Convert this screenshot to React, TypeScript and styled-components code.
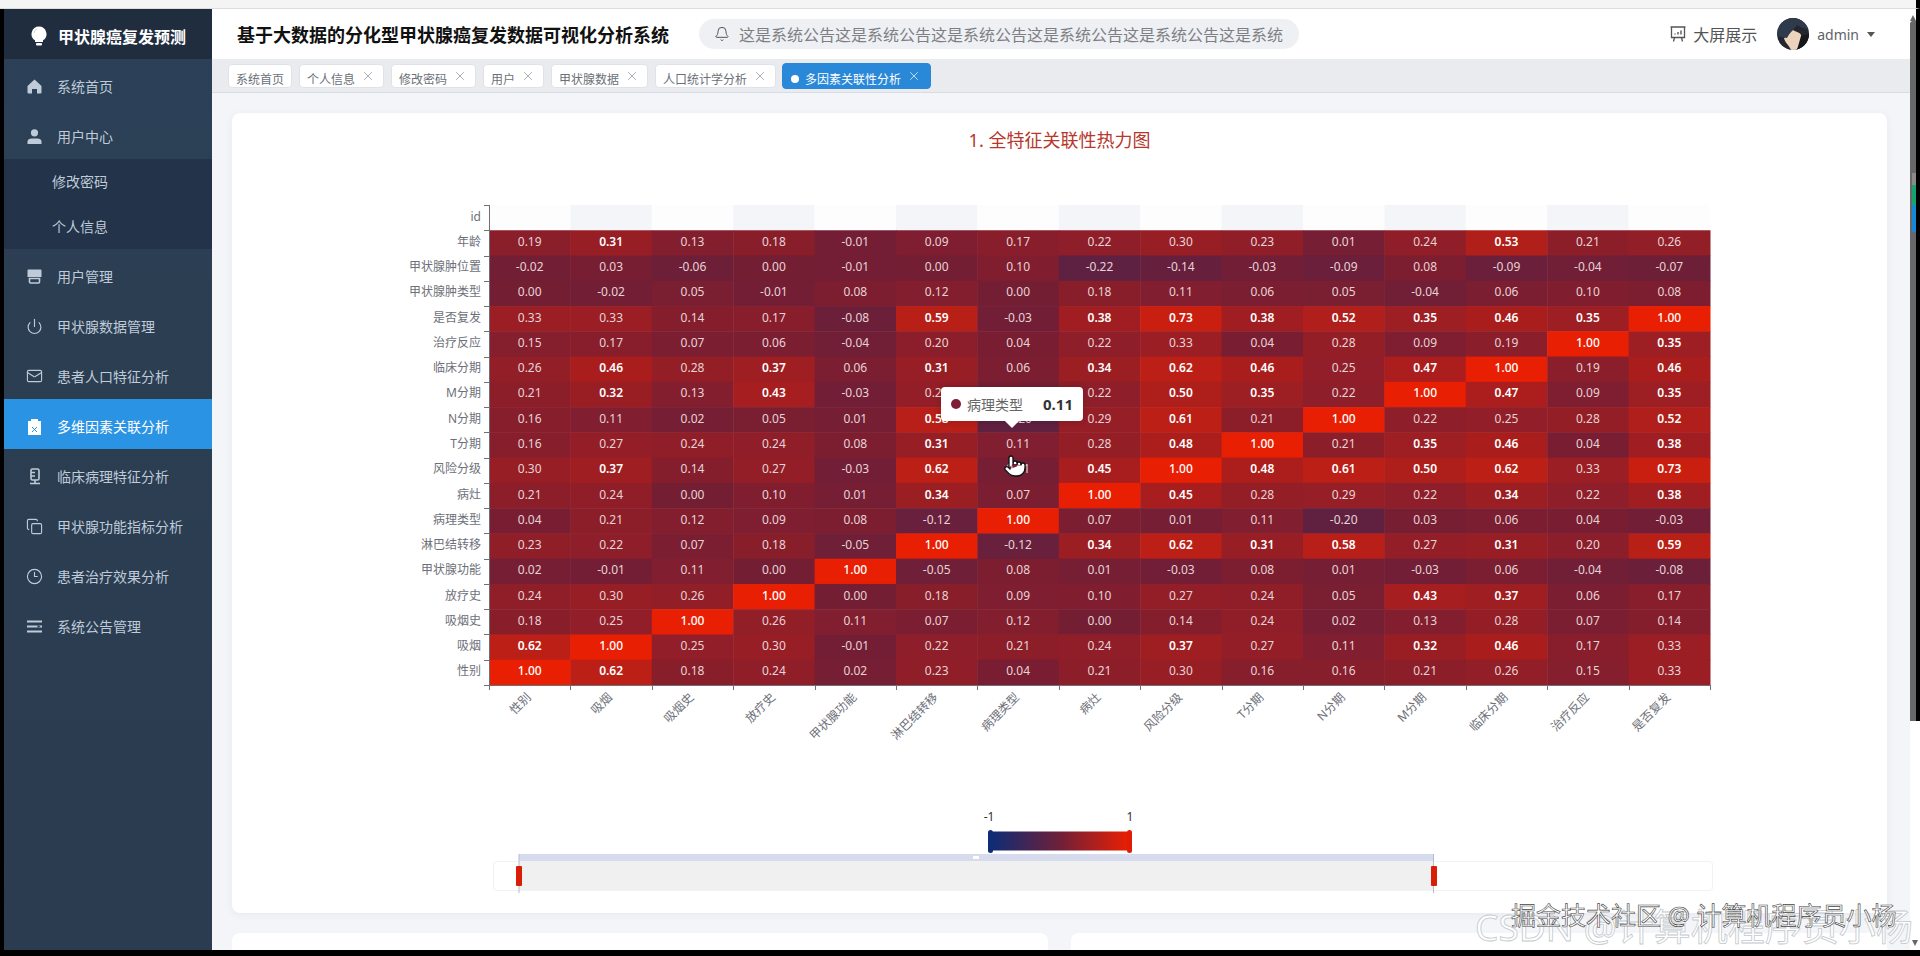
import React from "react";
import styled, { createGlobalStyle } from "styled-components";
import { Bell, Clock3, Copy, Mail, Pointer, Power, X } from "lucide-react";

const FONT = `"Noto Sans", "Noto Sans CJK SC", sans-serif`;

const GlobalStyle = createGlobalStyle`
  html, body {
    margin: 0;
    padding: 0;
    height: 956px;
    overflow: hidden;
    background: #000;
    font-family: ${FONT};
  }
  * { box-sizing: border-box; }
`;

const Screen = styled.div`
  position: relative;
  width: 1920px;
  height: 950px;
  display: flex;
  flex-direction: column;
  background: #fff;
  overflow: hidden;
`;

const BrowserEdge = styled.div`
  height: 9px;
  flex: none;
  background: #f4f4f4;
  border-bottom: 1px solid #dcdcdc;
  border-right: 4px solid #000;
`;

const Body = styled.div`
  flex: 1;
  display: flex;
  min-height: 0;
  background: #000;
  padding-left: 4px;
`;

const Sidebar = styled.aside`
  width: 208px;
  flex: none;
  display: flex;
  flex-direction: column;
  background: linear-gradient(180deg, #2b4159 0%, #2c3e52 30%, #2b3c50 100%);
`;

const Brand = styled.div`
  height: 50px;
  display: flex;
  align-items: center;
  gap: 11px;
  padding: 3px 0 0 27px;
  background: #1f2d3f;
  color: #fff;
  font-size: 16px;
  font-weight: 700;
`;

const MenuItem = styled.div<{ $active?: boolean }>`
  height: 50px;
  display: flex;
  align-items: center;
  gap: 14px;
  padding: 4px 0 0 22px;
  font-size: 14px;
  color: ${({ $active }) => ($active ? "#fff" : "#bfcbd9")};
  background: ${({ $active }) => ($active ? "#2b93e4" : "transparent")};
`;

const MenuIcon = styled.span`
  width: 17px;
  height: 18px;
  flex: none;
  display: flex;
  align-items: center;
  justify-content: center;
`;

const SubMenu = styled.div`
  background: #233349;
`;

const SubItem = styled.div`
  height: 45px;
  display: flex;
  align-items: center;
  padding: 0 0 2px 48px;
  font-size: 14px;
  color: #bfcbd9;
`;

const Main = styled.main`
  flex: 1;
  min-width: 0;
  display: flex;
  flex-direction: column;
  background: #f3f5f9;
`;

const TopBar = styled.header`
  height: 50px;
  flex: none;
  display: flex;
  align-items: center;
  padding: 0 35px 0 25px;
  background: #fff;
`;

const SystemTitle = styled.h1`
  margin: 0;
  font-size: 18px;
  font-weight: 700;
  color: #111;
  white-space: nowrap;
`;

const Notice = styled.div`
  width: 600px;
  height: 30px;
  margin-left: 30px;
  display: flex;
  align-items: center;
  gap: 9px;
  padding-left: 15px;
  border-radius: 15px;
  background: #eff0f3;
  color: #7c8085;
  font-size: 16px;
  white-space: nowrap;
  overflow: hidden;
`;

const TopActions = styled.div`
  margin-left: auto;
  display: flex;
  align-items: center;
`;

const ScreenLink = styled.div`
  display: flex;
  align-items: center;
  gap: 7px;
  font-size: 16px;
  color: #555;
`;

const Avatar = styled.svg`
  width: 32px;
  height: 32px;
  margin-left: 20px;
  border-radius: 50%;
`;

const UserName = styled.span`
  margin-left: 8px;
  font-size: 14px;
  color: #5f6368;
`;

const Caret = styled.span`
  margin-left: 8px;
  width: 0;
  height: 0;
  border-left: 4px solid transparent;
  border-right: 4px solid transparent;
  border-top: 5px solid #555;
`;

const TabBar = styled.nav`
  height: 34px;
  flex: none;
  display: flex;
  gap: 7px;
  padding: 5px 0 0 16px;
  background: #e9ebee;
  border-bottom: 1px solid #d8dce5;
`;

const Tab = styled.div<{ $active?: boolean }>`
  height: ${({ $active }) => ($active ? "26px" : "24px")};
  margin: ${({ $active }) => ($active ? "-1px 0 0 -1px" : "0")};
  display: flex;
  align-items: flex-start;
  gap: 8px;
  padding: ${({ $active }) => ($active ? "8px 8px 0 8px" : "7px 7px 0 7px")};
  border: 1px solid ${({ $active }) => ($active ? "#2a88d8" : "#dfe2e8")};
  border-radius: 4px;
  font-size: 12px;
  line-height: 16px;
  white-space: nowrap;
  color: ${({ $active }) => ($active ? "#fff" : "#6b7078")};
  background: ${({ $active }) => ($active ? "#2a88d8" : "#fff")};

  svg {
    flex: none;
    margin: -3px 1px 0 -2px;
  }
`;

const TabDot = styled.span`
  width: 8px;
  height: 8px;
  margin: 3px -2px 0 0;
  border-radius: 50%;
  background: #fff;
`;

const Content = styled.section`
  flex: 1;
  min-height: 0;
  display: flex;
  flex-direction: column;
  gap: 20px;
  padding: 20px 0 0 20px;
`;

const Card = styled.div`
  position: relative;
  width: 1655px;
  height: 800px;
  flex: none;
  display: flex;
  flex-direction: column;
  align-items: center;
  border-radius: 8px;
  background: #fff;
  box-shadow: 0 2px 8px rgba(40, 50, 70, 0.06);
`;

const CardTitle = styled.h2`
  margin: 15px 0 0;
  font-size: 18px;
  line-height: 24px;
  font-weight: 400;
  color: #b8372c;
`;

const ChartWrap = styled.div`
  width: 1655px;
  height: 761px;
`;

const PeekRow = styled.div`
  display: grid;
  grid-template-columns: 816px 816px;
  gap: 23px;
`;

const PeekCard = styled.div`
  height: 30px;
  border-radius: 8px 8px 0 0;
  background: #fff;
`;

const ScrollRail = styled.div`
  position: relative;
  width: 10px;
  flex: none;
  display: flex;
  flex-direction: column;
  background: #fff;
`;

const ScrollCap = styled.div`
  height: 12px;
  flex: none;
  display: flex;
  align-items: flex-end;
  border-right: 4px solid #000;
`;

const ArrowUp = styled.span`
  width: 0;
  height: 0;
  border-left: 3px solid transparent;
  border-right: 3px solid transparent;
  border-bottom: 6px solid #666;
`;

const ScrollThumb = styled.div`
  width: 10px;
  height: 700px;
  flex: none;
  background: #686868;
  border-right: 4px solid #000;
  border-radius: 3px 0 0 0;
`;

const ArrowDown = styled.span`
  margin: auto 0 4px 2px;
  width: 0;
  height: 0;
  border-left: 3px solid transparent;
  border-right: 3px solid transparent;
  border-top: 6px solid #666;
`;

const ScrollMarks = styled.div`
  position: absolute;
  left: 2px;
  top: 164px;
  width: 4px;
  height: 59px;
  background: linear-gradient(180deg, #8a8a8a 0 12px, #15a36f 12px 32px, #1688d8 32px 100%);
`;

const Tooltip = styled.div`
  position: absolute;
  left: 709px;
  top: 274px;
  width: 142px;
  height: 34px;
  display: flex;
  align-items: center;
  padding: 0 10px 0 10px;
  border-radius: 4px;
  background: #fff;
  box-shadow: 0 0 6px rgba(0, 0, 0, 0.2);
  font-size: 14px;
  color: #666;

  &::after {
    content: "";
    position: absolute;
    left: 66px;
    bottom: -5px;
    width: 10px;
    height: 10px;
    background: #fff;
    transform: rotate(45deg);
  }
`;

const TipDot = styled.span`
  width: 10px;
  height: 10px;
  margin-right: 6px;
  border-radius: 50%;
  background: #7f1d37;
`;

const TipValue = styled.b`
  margin-left: auto;
  font-size: 15px;
  color: #333;
`;

const HandCursor = styled(Pointer)`
  position: absolute;
  left: 771px;
  top: 341px;
`;

const Watermark = styled.div<{ $top: number; $left: number; $size: number; $stroke: string; $width: number }>`
  position: absolute;
  top: ${({ $top }) => $top}px;
  left: ${({ $left }) => $left}px;
  font-size: ${({ $size }) => $size}px;
  line-height: 1;
  white-space: nowrap;
  color: #fff;
  -webkit-text-stroke: ${({ $width }) => $width}px ${({ $stroke }) => $stroke};
  pointer-events: none;
`;

const labels = [
  "性别", "吸烟", "吸烟史", "放疗史", "甲状腺功能", "淋巴结转移", "病理类型", "病灶",
  "风险分级", "T分期", "N分期", "M分期", "临床分期", "治疗反应", "是否复发",
];

const rows: { name: string; values: number[] }[] = [
  { name: "年龄", values: [0.19, 0.31, 0.13, 0.18, -0.01, 0.09, 0.17, 0.22, 0.3, 0.23, 0.01, 0.24, 0.53, 0.21, 0.26] },
  { name: "甲状腺肿位置", values: [-0.02, 0.03, -0.06, 0, -0.01, 0, 0.1, -0.22, -0.14, -0.03, -0.09, 0.08, -0.09, -0.04, -0.07] },
  { name: "甲状腺肿类型", values: [0, -0.02, 0.05, -0.01, 0.08, 0.12, 0, 0.18, 0.11, 0.06, 0.05, -0.04, 0.06, 0.1, 0.08] },
  { name: "是否复发", values: [0.33, 0.33, 0.14, 0.17, -0.08, 0.59, -0.03, 0.38, 0.73, 0.38, 0.52, 0.35, 0.46, 0.35, 1] },
  { name: "治疗反应", values: [0.15, 0.17, 0.07, 0.06, -0.04, 0.2, 0.04, 0.22, 0.33, 0.04, 0.28, 0.09, 0.19, 1, 0.35] },
  { name: "临床分期", values: [0.26, 0.46, 0.28, 0.37, 0.06, 0.31, 0.06, 0.34, 0.62, 0.46, 0.25, 0.47, 1, 0.19, 0.46] },
  { name: "M分期", values: [0.21, 0.32, 0.13, 0.43, -0.03, 0.27, 0.03, 0.22, 0.5, 0.35, 0.22, 1, 0.47, 0.09, 0.35] },
  { name: "N分期", values: [0.16, 0.11, 0.02, 0.05, 0.01, 0.58, -0.2, 0.29, 0.61, 0.21, 1, 0.22, 0.25, 0.28, 0.52] },
  { name: "T分期", values: [0.16, 0.27, 0.24, 0.24, 0.08, 0.31, 0.11, 0.28, 0.48, 1, 0.21, 0.35, 0.46, 0.04, 0.38] },
  { name: "风险分级", values: [0.3, 0.37, 0.14, 0.27, -0.03, 0.62, 0.01, 0.45, 1, 0.48, 0.61, 0.5, 0.62, 0.33, 0.73] },
  { name: "病灶", values: [0.21, 0.24, 0, 0.1, 0.01, 0.34, 0.07, 1, 0.45, 0.28, 0.29, 0.22, 0.34, 0.22, 0.38] },
  { name: "病理类型", values: [0.04, 0.21, 0.12, 0.09, 0.08, -0.12, 1, 0.07, 0.01, 0.11, -0.2, 0.03, 0.06, 0.04, -0.03] },
  { name: "淋巴结转移", values: [0.23, 0.22, 0.07, 0.18, -0.05, 1, -0.12, 0.34, 0.62, 0.31, 0.58, 0.27, 0.31, 0.2, 0.59] },
  { name: "甲状腺功能", values: [0.02, -0.01, 0.11, 0, 1, -0.05, 0.08, 0.01, -0.03, 0.08, 0.01, -0.03, 0.06, -0.04, -0.08] },
  { name: "放疗史", values: [0.24, 0.3, 0.26, 1, 0, 0.18, 0.09, 0.1, 0.27, 0.24, 0.05, 0.43, 0.37, 0.06, 0.17] },
  { name: "吸烟史", values: [0.18, 0.25, 1, 0.26, 0.11, 0.07, 0.12, 0, 0.14, 0.24, 0.02, 0.13, 0.28, 0.07, 0.14] },
  { name: "吸烟", values: [0.62, 1, 0.25, 0.3, -0.01, 0.22, 0.21, 0.24, 0.37, 0.27, 0.11, 0.32, 0.46, 0.17, 0.33] },
  { name: "性别", values: [1, 0.62, 0.18, 0.24, 0.02, 0.23, 0.04, 0.21, 0.3, 0.16, 0.16, 0.21, 0.26, 0.15, 0.33] },
];

const LOW = [15, 44, 116];
const MID = [116, 30, 52];
const HIGH = [232, 31, 3];

const cellColor = (v: number) => {
  const [from, to, t] = v < 0 ? [MID, LOW, -v] : [MID, HIGH, v];
  const mix = from.map((c, i) => Math.round(c + (to[i] - c) * t));
  return `rgb(${mix.join(",")})`;
};

// chart coordinates, relative to the card (card starts at 232, 113)
const PLOT_X = 257;
const PLOT_W = 1221;
const PLOT_TOP = 92;
const PLOT_H = 480;
const COL_W = PLOT_W / 15;
const ROW_H = PLOT_H / 19;

const HeatmapChart = () => (
  <svg width={1655} height={800} viewBox="0 0 1655 800" style={{ position: "absolute", left: 0, top: 0 }} fontFamily={FONT}>
    {labels.map((_, i) => (
      <rect
        key={i}
        x={PLOT_X + i * COL_W}
        y={PLOT_TOP}
        width={COL_W}
        height={ROW_H}
        fill={i % 2 ? "#f3f5f9" : "#fdfdfe"}
      />
    ))}

    {rows.map((row, r) => {
      const y = PLOT_TOP + (r + 1) * ROW_H;
      return (
        <g key={row.name}>
          {row.values.map((v, c) => {
            const strong = (v >= 0.31 && v !== 0.33) || v === 1;
            return (
              <g key={c}>
                <rect x={PLOT_X + c * COL_W} y={y} width={COL_W + 0.5} height={ROW_H + 0.5} fill={cellColor(v)} />
                <text
                  x={PLOT_X + c * COL_W + COL_W / 2}
                  y={y + ROW_H / 2 + 3}
                  textAnchor="middle"
                  fontSize={12}
                  fontWeight={v === 1 ? 500 : strong ? 600 : 400}
                  fill={strong ? "#fff" : "#e6d3d6"}
                >
                  {v.toFixed(2)}
                </text>
              </g>
            );
          })}
          <text x={PLOT_X - 8} y={y + ROW_H / 2 + 3} textAnchor="end" fontSize={12} fill="#6e7079">
            {row.name}
          </text>
        </g>
      );
    })}
    <text x={PLOT_X - 8} y={PLOT_TOP + ROW_H / 2 + 3} textAnchor="end" fontSize={12} fill="#6e7079">
      id
    </text>

    <g stroke="#6e7079" strokeWidth={1}>
      <line x1={PLOT_X + 0.5} y1={PLOT_TOP} x2={PLOT_X + 0.5} y2={PLOT_TOP + PLOT_H} />
      <line x1={PLOT_X} y1={PLOT_TOP + PLOT_H + 0.5} x2={PLOT_X + PLOT_W} y2={PLOT_TOP + PLOT_H + 0.5} />
      {Array.from({ length: 20 }, (_, i) => {
        const y = Math.round(PLOT_TOP + i * ROW_H) + 0.5;
        return <line key={i} x1={PLOT_X - 5} y1={y} x2={PLOT_X} y2={y} />;
      })}
      {Array.from({ length: 16 }, (_, i) => {
        const x = Math.round(PLOT_X + i * COL_W) + 0.5;
        return <line key={i} x1={x} y1={PLOT_TOP + PLOT_H} x2={x} y2={PLOT_TOP + PLOT_H + 5} />;
      })}
    </g>

    {labels.map((label, i) => {
      const x = PLOT_X + i * COL_W + COL_W / 2 + 2;
      const y = PLOT_TOP + PLOT_H + 13;
      return (
        <text key={label} x={x} y={y} textAnchor="end" fontSize={12} fill="#6e7079" transform={`rotate(-45 ${x} ${y})`}>
          {label}
        </text>
      );
    })}

    {/* visual map */}
    <text x={757} y={708} textAnchor="middle" fontSize={12} fill="#333">-1</text>
    <text x={898} y={708} textAnchor="middle" fontSize={12} fill="#333">1</text>
    <defs>
      <linearGradient id="legend">
        <stop offset="0" stopColor="#0f2c74" />
        <stop offset="0.5" stopColor="#6f2039" />
        <stop offset="1" stopColor="#e81f03" />
      </linearGradient>
    </defs>
    <rect x={760} y={718} width={136} height={20} fill="url(#legend)" stroke="#fff" />
    <rect x={756} y={717} width={5} height={23} rx={2.5} fill="#0f2c74" />
    <rect x={895} y={717} width={5} height={23} rx={2.5} fill="#e01c06" />

    {/* data zoom */}
    <rect x={261.5} y={748.5} width={1219} height={29} rx={3} fill="#fff" stroke="#f2f2f2" />
    <rect x={287} y={748} width={915} height={29} fill="#f0f0f0" />
    <rect x={287} y={741} width={915} height={7} fill="#d6dbee" />
    <rect x={741} y={743} width={6} height={3} fill="#fff" />
    <line x1={287} y1={741} x2={287} y2={780} stroke="#b5bccb" />
    <line x1={1201.5} y1={741} x2={1201.5} y2={780} stroke="#b5bccb" />
    <rect x={284} y={753} width={6} height={20} rx={1} fill="#d81e06" />
    <rect x={1199} y={753} width={6} height={20} rx={1} fill="#d81e06" />
  </svg>
);

const ClipboardIcon = () => (
  <svg width="15" height="17" viewBox="0 0 15 17">
    <path d="M1 3h3V1h7v2h3v14H1z" fill="#fff" />
    <path d="M5 9l5 5M10 9l-5 5" stroke="#2b93e4" strokeWidth="1" />
  </svg>
);

const BulbIcon = () => (
  <svg width="16" height="20" viewBox="0 0 16 20">
    <path d="M8 0.5a7.500 7.500 0 0 1 4 13.800V16H4v-1.700a7.500 7.500 0 0 1 4-13.800z" fill="#fff" />
    <path d="M3 7a5 5 0 0 1 3-4" stroke="#c9d3df" strokeWidth="1" fill="none" />
    <rect x="5" y="17" width="6" height="2.500" rx="1" fill="#fff" />
  </svg>
);

const HouseIcon = () => (
  <svg width="15" height="15" viewBox="0 0 15 15">
    <path d="M7.500 0.500l7 6.500v6.500a1 1 0 0 1-1 1H10V10H5v4.500H1.500a1 1 0 0 1-1-1V7z" fill="#bfcbd9" />
  </svg>
);

const PersonIcon = () => (
  <svg width="15" height="15" viewBox="0 0 15 15">
    <circle cx="7.500" cy="3.800" r="3.600" fill="#bfcbd9" />
    <path d="M0.500 15v-2.500c0-2 2-3 4-3h6c2 0 4 1 4 3V15z" fill="#bfcbd9" />
  </svg>
);

const BriefIcon = () => (
  <svg width="15" height="15" viewBox="0 0 15 15">
    <path d="M1.500 0.500h12a1 1 0 0 1 1 1V8H0.500V1.500a1 1 0 0 1 1-1z" fill="#bfcbd9" />
    <path d="M2.500 9.500h10v3.500a1 1 0 0 1-1 1H3.500a1 1 0 0 1-1-1z" fill="none" stroke="#bfcbd9" strokeWidth="1.600" />
  </svg>
);

const BarsIcon = () => (
  <svg width="15" height="13" viewBox="0 0 15 13">
    <path d="M0 1.500h15M0 6.500h15M0 11.500h15" stroke="#bfcbd9" strokeWidth="2.200" />
    <path d="M10.500 5l3 1.500-3 1.500z" fill="#2c3e52" />
  </svg>
);

const ProbeIcon = () => (
  <svg width="12" height="17" viewBox="0 0 12 17" fill="none" stroke="#bfcbd9" strokeWidth="1.600">
    <rect x="2" y="1" width="8" height="11" rx="1.500" />
    <path d="M1 15.500h10M2 4.500h4M2 8h4" />
    <path d="M6 12v3.500" />
  </svg>
);

const ScreenIcon = () => (
  <svg width="16" height="16" viewBox="0 0 16 16" fill="none" stroke="#555" strokeWidth="1.300">
    <path d="M0.500 1h15M1.500 1v10.500h13V1" />
    <path d="M4.500 11.500L3.500 15.500M11.500 11.500l1 4" />
    <path d="M5 8.500v-1M8 8.500V6M11 8.500V4.500" strokeWidth="1.400" />
  </svg>
);

const MiniAvatar = () => (
  <Avatar viewBox="0 0 32 32">
    <rect width="32" height="32" fill="#23262c" />
    <path d="M14 32c-2-5-6-7-7-12 3-1 6-6 9-8 3 2 7 2 8 5 1 6-2 12-5 15z" fill="#ecd4bc" />
    <path d="M0 0h32v12c-4-2-8-2-12-5-3 4-7 7-10 13L0 18z" fill="#2f3b4c" />
    <path d="M24 18l8-2v16H20z" fill="#15171b" />
  </Avatar>
);

const menu: { label: string; icon: React.ReactNode; active?: boolean; children?: string[] }[] = [
  { label: "系统首页", icon: <HouseIcon /> },
  { label: "用户中心", icon: <PersonIcon />, children: ["修改密码", "个人信息"] },
  { label: "用户管理", icon: <BriefIcon /> },
  { label: "甲状腺数据管理", icon: <Power size={17} strokeWidth={1.6} /> },
  { label: "患者人口特征分析", icon: <Mail size={18} strokeWidth={1.6} /> },
  { label: "多维因素关联分析", icon: <ClipboardIcon />, active: true },
  { label: "临床病理特征分析", icon: <ProbeIcon /> },
  { label: "甲状腺功能指标分析", icon: <Copy size={17} strokeWidth={1.6} /> },
  { label: "患者治疗效果分析", icon: <Clock3 size={17} strokeWidth={1.6} /> },
  { label: "系统公告管理", icon: <BarsIcon /> },
];

const tabs = ["系统首页", "个人信息", "修改密码", "用户", "甲状腺数据", "人口统计学分析"];

const App: React.FC = () => (
  <Screen>
    <GlobalStyle />
    <BrowserEdge />
    <Body>
      <Sidebar>
        <Brand>
          <BulbIcon />
          甲状腺癌复发预测
        </Brand>
        {menu.map((item) => (
          <React.Fragment key={item.label}>
            <MenuItem $active={item.active}>
              <MenuIcon>{item.icon}</MenuIcon>
              <span>{item.label}</span>
            </MenuItem>
            {item.children && (
              <SubMenu>
                {item.children.map((child) => (
                  <SubItem key={child}>{child}</SubItem>
                ))}
              </SubMenu>
            )}
          </React.Fragment>
        ))}
      </Sidebar>
      <Main>
        <TopBar>
          <SystemTitle>基于大数据的分化型甲状腺癌复发数据可视化分析系统</SystemTitle>
          <Notice>
            <Bell size={16} strokeWidth={1.5} color="#555" />
            这是系统公告这是系统公告这是系统公告这是系统公告这是系统公告这是系统
          </Notice>
          <TopActions>
            <ScreenLink>
              <ScreenIcon />
              大屏展示
            </ScreenLink>
            <MiniAvatar />
            <UserName>admin</UserName>
            <Caret />
          </TopActions>
        </TopBar>
        <TabBar>
          {tabs.map((tab, i) => (
            <Tab key={tab}>
              {tab}
              {i > 0 && <X size={14} strokeWidth={1} />}
            </Tab>
          ))}
          <Tab $active>
            <TabDot />
            多因素关联性分析
            <X size={14} strokeWidth={1.2} />
          </Tab>
        </TabBar>
        <Content>
          <Card>
            <CardTitle>1. 全特征关联性热力图</CardTitle>
            <ChartWrap>
              <HeatmapChart />
            </ChartWrap>
            <Tooltip>
              <TipDot />
              病理类型
              <TipValue>0.11</TipValue>
            </Tooltip>
            <HandCursor size={24} fill="#fff" color="#111" strokeWidth={1.3} />
          </Card>
          <PeekRow>
            <PeekCard />
            <PeekCard />
          </PeekRow>
        </Content>
      </Main>
      <ScrollRail>
        <ScrollCap>
          <ArrowUp />
        </ScrollCap>
        <ScrollThumb />
        <ScrollMarks />
        <ArrowDown />
      </ScrollRail>
    </Body>
    <Watermark $top={908} $left={1475} $size={37} $stroke="#c4c8cc" $width={0.8}>
      CSDN @计算机程序员小杨
    </Watermark>
    <Watermark $top={903} $left={1511} $size={25} $stroke="#444" $width={0.6}>
      掘金技术社区 @ 计算机程序员小杨
    </Watermark>
  </Screen>
);

export default App;
